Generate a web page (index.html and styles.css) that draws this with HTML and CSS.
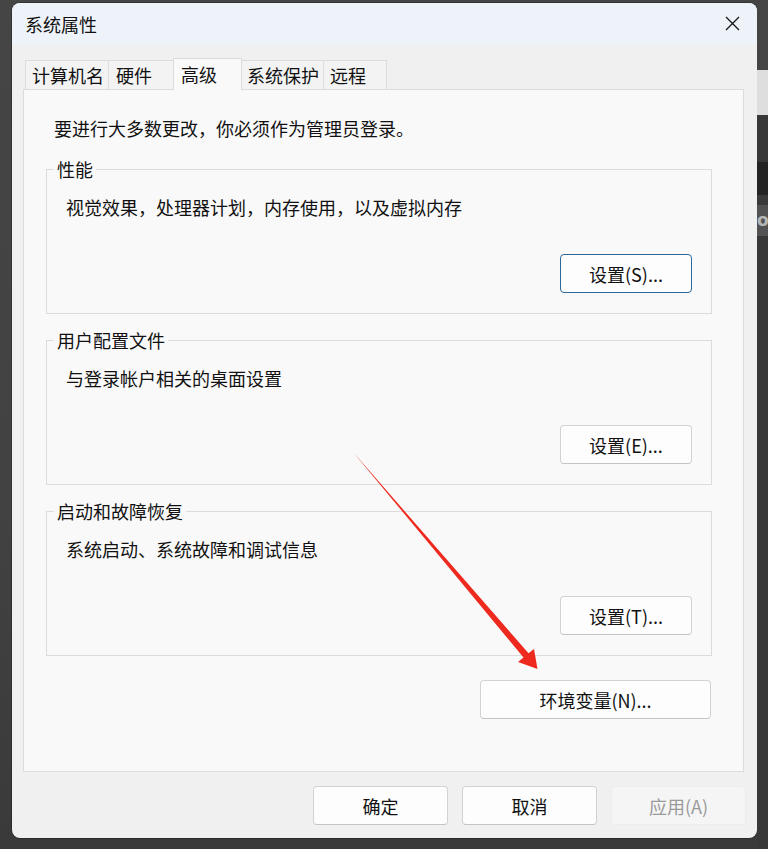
FILE: index.html
```html
<!DOCTYPE html>
<html lang="zh-CN">
<head>
<meta charset="utf-8">
<title>系统属性</title>
<link rel="stylesheet" href="styles.css">
</head>
<body>
<div class="screen">
  <div class="window">
    <div class="titlebar">
      <span class="title">系统属性</span>
      <span class="close">
        <svg width="15" height="15" viewBox="0 0 15 15"><path d="M1 1 L14 14 M14 1 L1 14" stroke="#1b1b1b" stroke-width="1.4" fill="none"/></svg>
      </span>
    </div>
    <div class="content">
      <div class="tabs">
        <div class="tab w1">计算机名</div>
        <div class="tab w2">硬件</div>
        <div class="tab w3 active">高级</div>
        <div class="tab w4">系统保护</div>
        <div class="tab w5 last">远程</div>
      </div>
      <div class="panel">
        <p class="intro">要进行大多数更改，你必须作为管理员登录。</p>
        <fieldset class="group">
          <legend>性能</legend>
          <p class="desc">视觉效果，处理器计划，内存使用，以及虚拟内存</p>
          <div class="row"><span class="btn focus">设置(S)...</span></div>
        </fieldset>
        <fieldset class="group">
          <legend>用户配置文件</legend>
          <p class="desc">与登录帐户相关的桌面设置</p>
          <div class="row"><span class="btn">设置(E)...</span></div>
        </fieldset>
        <fieldset class="group">
          <legend>启动和故障恢复</legend>
          <p class="desc">系统启动、系统故障和调试信息</p>
          <div class="row"><span class="btn">设置(T)...</span></div>
        </fieldset>
        <div class="env-row"><span class="btn env">环境变量(N)...</span></div>
      </div>
      <div class="footer">
        <span class="btn wide">确定</span>
        <span class="btn wide">取消</span>
        <span class="btn wide disabled">应用(A)</span>
      </div>
    </div>
  </div>
  <div class="strip">
    <div class="band b1"></div>
    <div class="band b2"></div>
    <div class="band b3"></div>
    <div class="band b4"></div>
    <div class="band b5"></div>
    <div class="band b6">o</div>
    <div class="band b7"></div>
  </div>
  <svg class="arrow" width="768" height="849" viewBox="0 0 768 849">
    <polygon points="353,452 528.5,653.2 534,649 537.5,669 518,662 523.5,657.5" fill="#ee2a1f"/>
  </svg>
</div>
</body>
</html>
```
FILE: styles.css
```css
* { box-sizing: border-box; }
html, body { margin: 0; padding: 0; }
body {
  width: 768px;
  height: 849px;
  overflow: hidden;
  background: #3d3d3d;
  font-family: "Noto Sans CJK SC", "Microsoft YaHei", sans-serif;
  font-size: 18px;
  color: #111;
}
.screen {
  position: relative;
  display: flex;
  width: 768px;
  height: 849px;
  background: linear-gradient(#454545 0, #424242 500px, #3a3a3a 849px);
}
.window {
  flex: none;
  margin: 3px 0 0 12px;
  width: 745px;
  height: 835px;
  border-radius: 8px;
  background: #f0f0f0;
  overflow: hidden;
  box-shadow: 0 0 0 1px rgba(0,0,0,0.25);
  display: flex;
  flex-direction: column;
}
.titlebar {
  height: 42px;
  background: #eef3fa;
  display: flex;
  align-items: center;
  justify-content: space-between;
  padding: 0 17px 0 13px;
}
.title { line-height: 24px; }
.close { display: flex; width: 15px; height: 15px; margin-top: -1px; }
.content {
  padding: 13px 13px 0 11px;
  display: flex;
  flex-direction: column;
}
.tabs {
  display: flex;
  align-items: flex-end;
  height: 31px;
  padding-left: 2px;
  position: relative;
  z-index: 1;
}
.tab {
  height: 29px;
  line-height: 28px;
  padding-left: 6px;
  background: #f3f3f3;
  border-top: 1px solid #dcdcdc;
  border-left: 1px solid #dcdcdc;
  white-space: nowrap;
}
.tab.last { border-right: 1px solid #dcdcdc; }
.w1 { width: 83px; }
.w2 { width: 65px; padding-left: 7px; }
.w3 { width: 69px; padding-left: 7px; }
.w4 { width: 82px; padding-left: 5px; }
.w5 { width: 64px; padding-left: 6px; }
.tab.active {
  height: 32px;
  line-height: 30px;
  margin-bottom: -1px;
  background: #f9f9f9;
  border-right: 1px solid #dcdcdc;
  margin-right: -1px;
  position: relative;
}
.panel {
  height: 683px;
  background: #f9f9f9;
  border: 1px solid #dcdcdc;
  padding: 26px 31px 0 22px;
  display: flex;
  flex-direction: column;
}
.intro {
  margin: 0 0 17px 8px;
  line-height: 24px;
}
.group {
  margin: 0 0 14px 0;
  padding: 0 19px 20px 19px;
  border: 1px solid #dcdcdc;
  min-width: 0;
}
.group legend {
  padding: 0 3px;
  margin-left: -12px;
  line-height: 24px;
}
.desc {
  margin: 14px 0 0 0;
  line-height: 24px;
}
.row {
  display: flex;
  justify-content: flex-end;
  margin-top: 35px;
}
.btn {
  display: flex;
  align-items: center;
  justify-content: center;
  width: 132px;
  height: 39px;
  background: #fdfdfd;
  border: 1px solid #d2d2d2;
  border-bottom-color: #c4c4c4;
  border-radius: 4px;
  line-height: 24px;
  white-space: nowrap;
}
.btn.focus {
  border: 1px solid #2b6898;
}
.env-row {
  display: flex;
  justify-content: flex-end;
  margin-top: 10px;
  padding-right: 1px;
}
.btn.env { width: 231px; }
.footer {
  display: flex;
  justify-content: flex-end;
  gap: 14px;
  margin: 14px -2px 0 0;
}
.btn.wide { width: 135px; }
.btn.disabled {
  background: #f5f5f5;
  border-color: #ececec;
  color: #9a9a9a;
}
.strip {
  flex: none;
  width: 11px;
  display: flex;
  flex-direction: column;
}
.band { width: 11px; flex: none; }
.b1 { height: 70px; background: #454545; }
.b2 { height: 45px; background: #dedede; }
.b3 { height: 47px; background: #383838; }
.b4 { height: 33px; background: #242424; }
.b5 { height: 10px; background: #3a3a3a; }
.b6 {
  height: 31px;
  background: #525252;
  color: #b5b5b5;
  font-family: "DejaVu Sans", sans-serif;
  font-size: 17px;
  font-weight: bold;
  line-height: 31px;
  overflow: hidden;
  white-space: nowrap;
}
.b7 { flex: 1; background: #383838; }
.arrow {
  position: absolute;
  left: 0;
  top: 0;
  pointer-events: none;
}
```
